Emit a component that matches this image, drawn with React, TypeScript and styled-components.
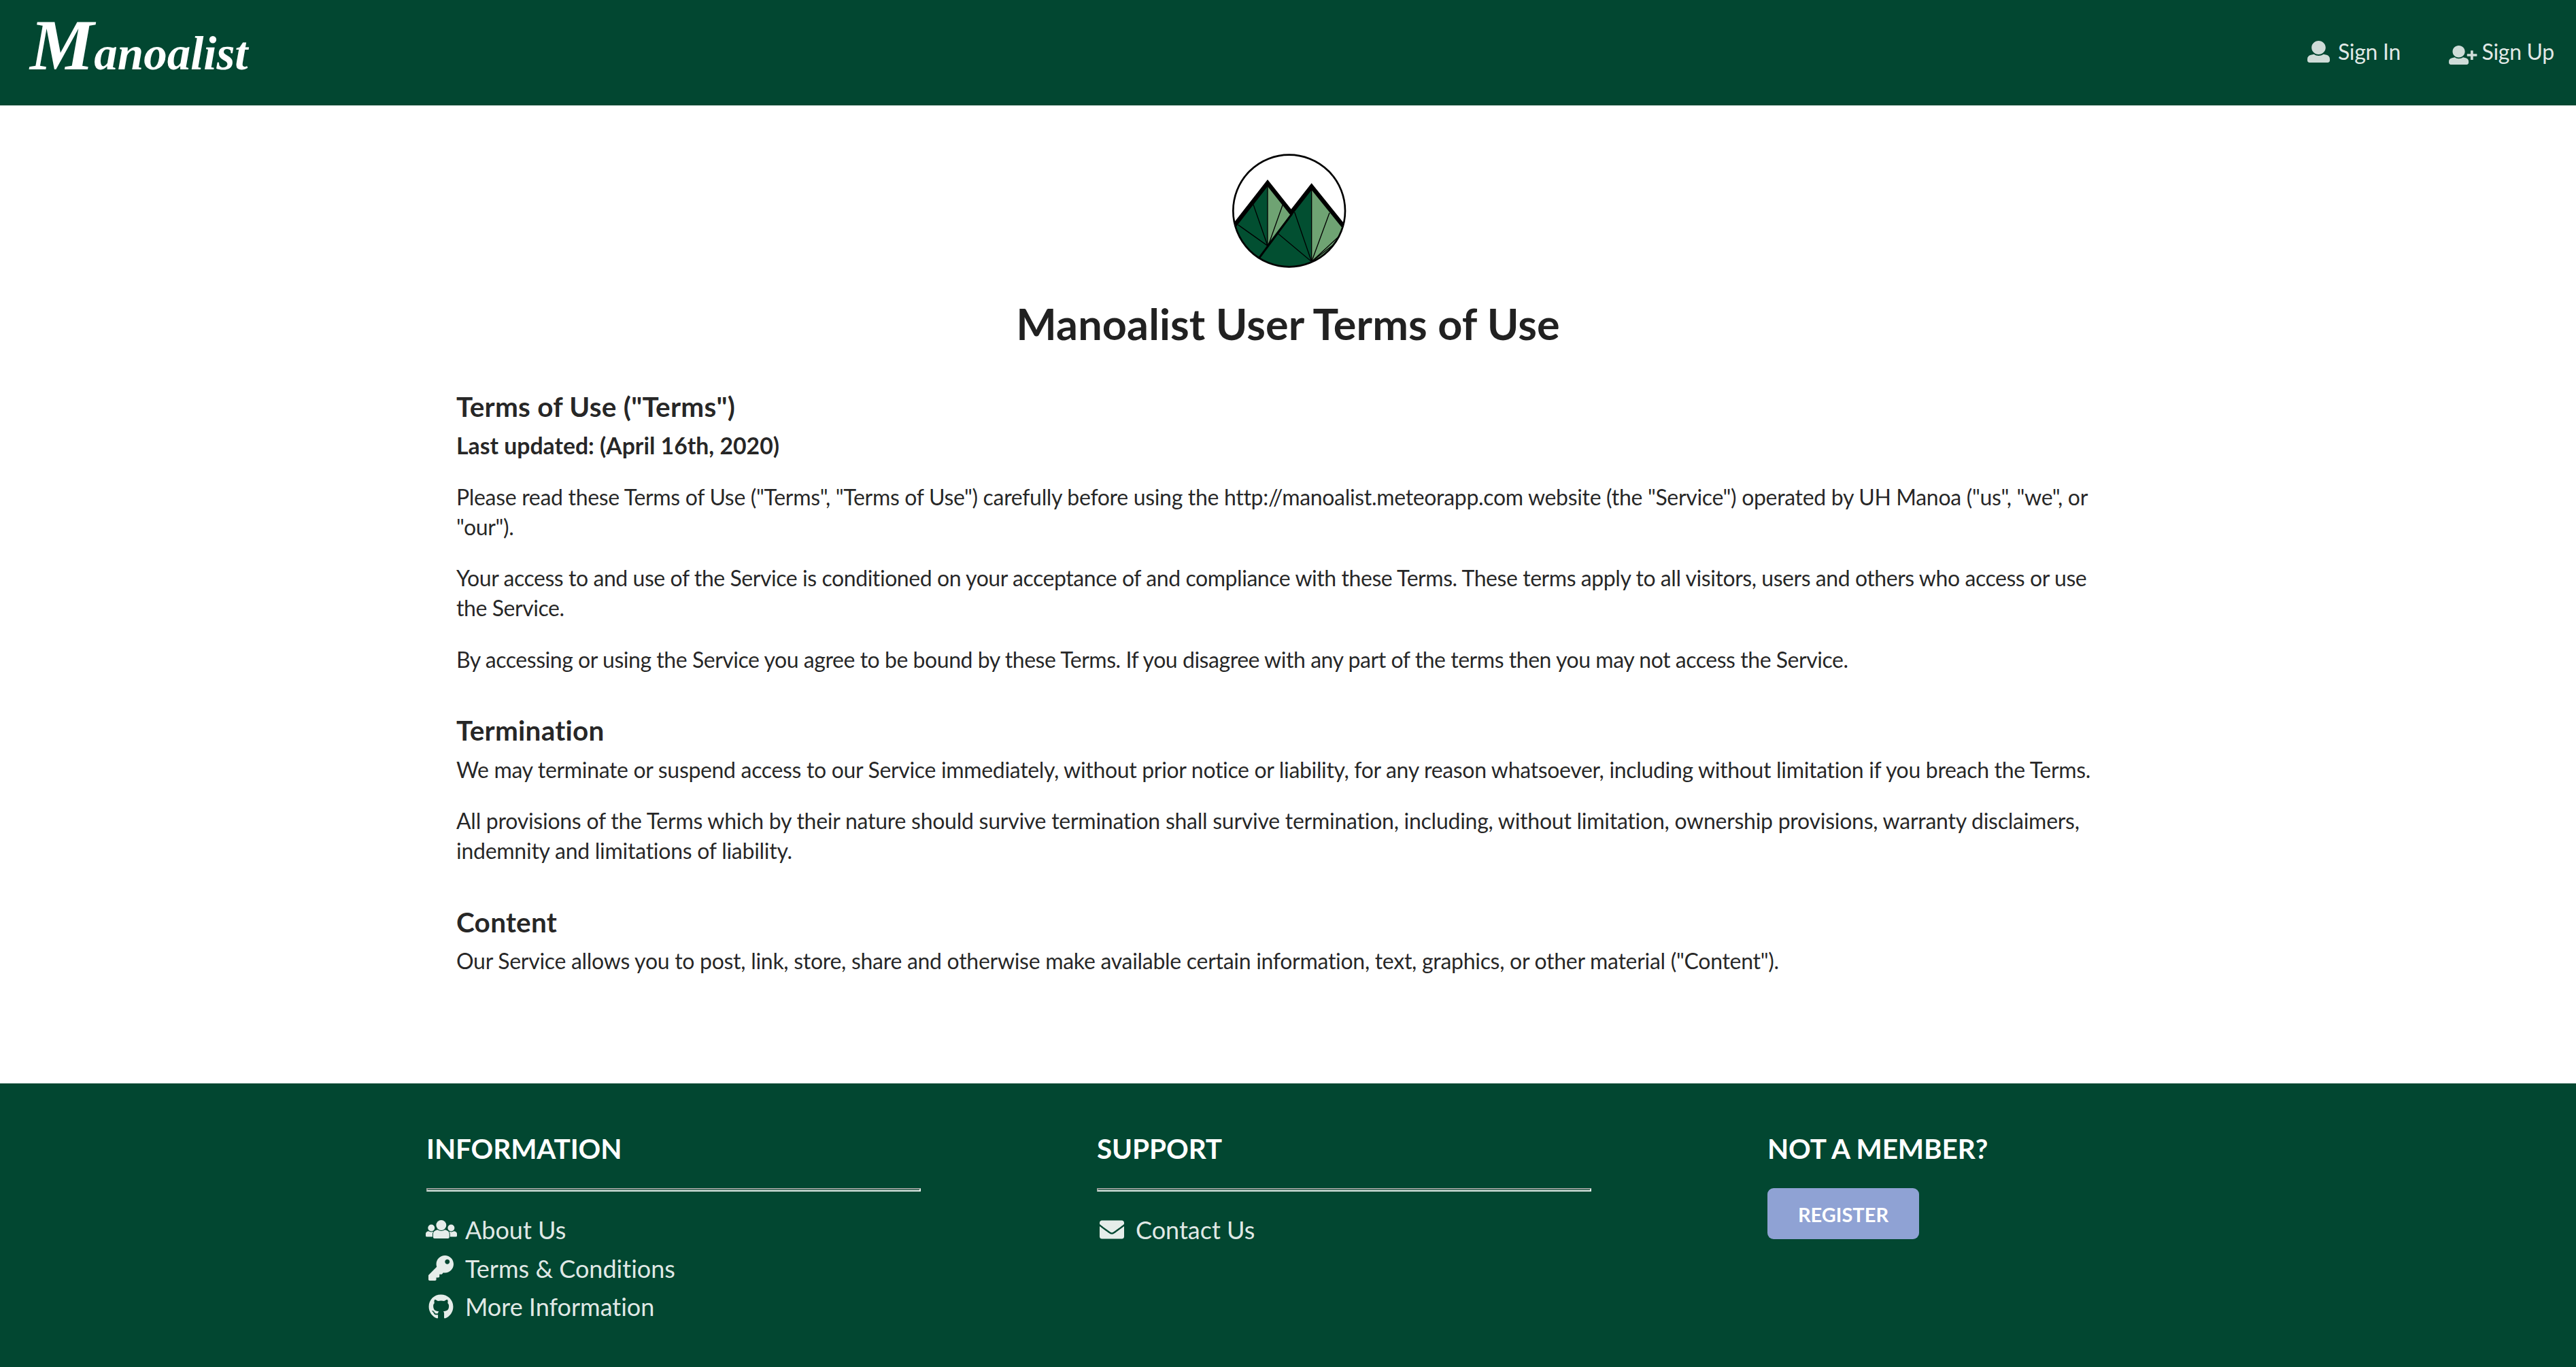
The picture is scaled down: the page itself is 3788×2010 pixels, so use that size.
import React from "react";
import styled, { createGlobalStyle } from "styled-components";
import { FaKey, FaGithub, FaEnvelope } from "react-icons/fa";

const GlobalStyle = createGlobalStyle`
  * { box-sizing: border-box; }
  body {
    margin: 0;
    background: #fff;
    color: rgba(0, 0, 0, 0.87);
    font: 32px/44px Lato, "Open Sans", sans-serif;
    font-variant-ligatures: none;
  }
`;

const Page = styled.div`
  display: flex;
  flex-direction: column;
  min-height: 2010px;
`;

const NavBar = styled.header`
  display: flex;
  align-items: center;
  justify-content: space-between;
  height: 155px;
  padding: 0 32px 4px 44px;
  background: #024731;
`;

const Brand = styled.div`
  padding-top: 6px;
  color: #fff;
  font: italic 700 69px/130px "Liberation Serif", serif;
  &::first-letter { font-size: 106px; line-height: 1; }
`;

const NavLinks = styled.nav`
  display: flex;
  gap: 71px;
`;

const NavLink = styled.a`
  display: flex;
  align-items: center;
  letter-spacing: -0.3px;
  color: rgba(255, 255, 255, 0.9);
`;

const NavIcon = styled.span<{ $drop: number; $gap: number }>`
  display: flex;
  margin: ${(p) => p.$drop}px ${(p) => p.$gap}px 0 0;
  color: rgba(255, 255, 255, 0.81);
`;

const Main = styled.main`
  flex: none;
  display: flex;
  flex-direction: column;
  align-items: center;
  height: 1438px;
  padding-top: 70px;
`;

const Emblem = styled.svg`
  flex: none;
  width: 170px;
  height: 170px;
  margin-left: 4px;
`;

const Title = styled.h1`
  margin: 39.5px 0 0;
  font-size: 63px;
  line-height: 81px;
  font-weight: 700;
  letter-spacing: 0.1px;
`;

const Terms = styled.div`
  width: 2446px;
  margin-top: 56.5px;
`;

const Section = styled.section`
  margin-bottom: 56.5px;
`;

const Heading = styled.h3`
  margin: 0;
  padding-bottom: 9.5px;
  font-size: 40.5px;
  line-height: 52px;
  font-weight: 700;
  letter-spacing: 0.25px;
`;

const Updated = styled.h4`
  margin: 0 0 33px;
  font-size: 33.75px;
  line-height: 42px;
  font-weight: 700;
`;

const Paragraph = styled.p<{ $tracking: number }>`
  margin: 0 0 31.5px;
  letter-spacing: ${(p) => p.$tracking}px;
  &:last-child { margin-bottom: 0; }
`;

const Footer = styled.footer`
  flex: 1;
  display: flex;
  gap: 259px;
  padding: 70px 0 0 627px;
  background: #024731;
  color: #fff;
`;

const Column = styled.div`
  width: 727px;
`;

const ColumnTitle = styled.h3`
  margin: 0 0 32px;
  font-size: 40.5px;
  line-height: 52px;
  font-weight: 700;
  letter-spacing: -0.1px;
  text-transform: uppercase;
`;

const Rule = styled.hr`
  margin: 0 0 27.5px;
  height: 5px;
  border: 2px solid;
  border-color: #9a9f9c #e9efec #e9efec #9a9f9c;
`;

const FooterLink = styled.a`
  display: flex;
  align-items: center;
  height: 56.7px;
  font-size: 36px;
  color: rgba(255, 255, 255, 0.9);
`;

const FooterIcon = styled.span`
  display: flex;
  justify-content: center;
  flex: none;
  width: 43px;
  margin-right: 14px;

  svg { flex: none; }
`;

const Register = styled.button`
  display: block;
  width: 223px;
  height: 75px;
  padding: 1px 0 0;
  border: 0;
  border-radius: 9px;
  background: #8fa2d4;
  color: #fff;
  font: 700 29px/45px Lato, sans-serif;
`;

const sections = [
  {
    title: 'Terms of Use ("Terms")',
    updated: "Last updated: (April 16th, 2020)",
    body: [
      { tracking: -0.32, text: 'Please read these Terms of Use ("Terms", "Terms of Use") carefully before using the http://manoalist.meteorapp.com website (the "Service") operated by UH Manoa ("us", "we", or "our").' },
      { tracking: -0.44, text: "Your access to and use of the Service is conditioned on your acceptance of and compliance with these Terms. These terms apply to all visitors, users and others who access or use the Service." },
      { tracking: -0.46, text: "By accessing or using the Service you agree to be bound by these Terms. If you disagree with any part of the terms then you may not access the Service." },
    ],
  },
  {
    title: "Termination",
    body: [
      { tracking: -0.33, text: "We may terminate or suspend access to our Service immediately, without prior notice or liability, for any reason whatsoever, including without limitation if you breach the Terms." },
      { tracking: -0.26, text: "All provisions of the Terms which by their nature should survive termination shall survive termination, including, without limitation, ownership provisions, warranty disclaimers, indemnity and limitations of liability." },
    ],
  },
  {
    title: "Content",
    body: [
      { tracking: -0.29, text: 'Our Service allows you to post, link, store, share and otherwise make available certain information, text, graphics, or other material ("Content").' },
    ],
  },
];

const personPath =
  "M256 0c88.366 0 160 71.634 160 160s-71.634 160-160 160S96 248.366 96 160 167.634 0 256 0zm183.283 333.821l-71.313-17.828c-74.923 53.89-165.738 41.864-215.94 0l-71.313 17.828C29.981 344.504 0 382.903 0 426.955V464c0 26.51 21.49 48 48 48h416c26.51 0 48-21.49 48-48v-37.045c0-44.052-29.981-82.451-72.717-93.134z";

function PersonIcon() {
  return (
    <svg width="33" height="32" viewBox="0 0 512 512" preserveAspectRatio="none" fill="currentColor">
      <path d={personPath} />
    </svg>
  );
}

function PersonPlusIcon() {
  return (
    <svg width="41.5" height="28" viewBox="0 0 124 84" fill="currentColor">
      <path d={personPath} transform="scale(0.17 0.164)" />
      <path d="M97 22h9q1 0 1 1v14h16q1 0 1 1v8q0 1-1 1h-16v15q0 1-1 1h-9q-1 0-1-1V47H81q-1 0-1-1v-8q0-1 1-1h15V23q0-1 1-1z" />
    </svg>
  );
}

function GroupIcon() {
  return (
    <svg width="46" height="27" viewBox="34 30 139 81" fill="currentColor">
      <circle cx="103" cy="52.5" r="22.5" />
      <circle cx="59" cy="64.5" r="15" />
      <circle cx="147" cy="64.5" r="15" />
      <path d="M86 73q17 10 34 0 19 4 19 19v13q0 6-6 6H73q-6 0-6-6V92q0-15 19-19z" />
      <path d="M46 79q11 6 22 1-4 6-4 12v12H39q-5 0-5-5v-8q0-9 12-12zM160 79q-11 6-22 1 4 6 4 12v12h26q5 0 5-5v-8q0-9-13-12z" />
    </svg>
  );
}

/* Twin peaks inside a ring */
function Mountains() {
  return (
    <Emblem viewBox="94 76 510 510">
      <defs>
        <clipPath id="disc"><circle cx="348" cy="331" r="247" /></clipPath>
      </defs>
      <g clipPath="url(#disc)">
        <path d="M253 205 L60 440 V600 H253Z" fill="#024f31" />
        <path d="M253 205 L365 345 L253 490Z" fill="#6fa373" />
        <path d="M447 225 L190 560 V600 H447Z" fill="#024f31" />
        <path d="M447 225 L620 435 V460 L447 600Z" fill="#6fa373" />
        <g fill="none" stroke="#000">
          <path d="M253 210 V485 M447 225 V560" strokeWidth="4" />
          <path d="M190 303 L253 485 M320 303 L258 478 M123 393 L253 485 M372 337 L447 555 L526 340 M300 432 L447 555 L580 432 M447 555 L585 448" strokeWidth="4" />
          <path d="M215 540 L360 345" strokeWidth="9" />
          <path d="M90 417 L253 208 L357 339 L447 224 L605 420" strokeWidth="19" />
        </g>
      </g>
      <circle cx="348" cy="331" r="247" fill="none" stroke="#000" strokeWidth="8" />
    </Emblem>
  );
}

function Link({ icon, children }: { icon: React.ReactNode; children: React.ReactNode }) {
  return (
    <FooterLink>
      <FooterIcon>{icon}</FooterIcon>
      {children}
    </FooterLink>
  );
}

export default function App() {
  return (
    <Page>
      <GlobalStyle />
      <NavBar>
        <Brand>Manoalist</Brand>
        <NavLinks>
          <NavLink>
            <NavIcon $drop={0} $gap={12}><PersonIcon /></NavIcon>
            Sign In
          </NavLink>
          <NavLink>
            <NavIcon $drop={10} $gap={7}><PersonPlusIcon /></NavIcon>
            Sign Up
          </NavLink>
        </NavLinks>
      </NavBar>
      <Main>
        <Mountains />
        <Title>Manoalist User Terms of Use</Title>
        <Terms>
          {sections.map((s) => (
            <Section key={s.title}>
              <Heading>{s.title}</Heading>
              {s.updated && <Updated>{s.updated}</Updated>}
              {s.body.map((p) => (
                <Paragraph key={p.text} $tracking={p.tracking}>{p.text}</Paragraph>
              ))}
            </Section>
          ))}
        </Terms>
      </Main>
      <Footer>
        <Column>
          <ColumnTitle>Information</ColumnTitle>
          <Rule />
          <Link icon={<GroupIcon />}>About Us</Link>
          <Link icon={<FaKey size={37} />}>Terms &amp; Conditions</Link>
          <Link icon={<FaGithub size={37} />}>More Information</Link>
        </Column>
        <Column>
          <ColumnTitle>Support</ColumnTitle>
          <Rule />
          <Link icon={<FaEnvelope size={36} />}>Contact Us</Link>
        </Column>
        <Column>
          <ColumnTitle>Not a member?</ColumnTitle>
          <Register>REGISTER</Register>
        </Column>
      </Footer>
    </Page>
  );
}
